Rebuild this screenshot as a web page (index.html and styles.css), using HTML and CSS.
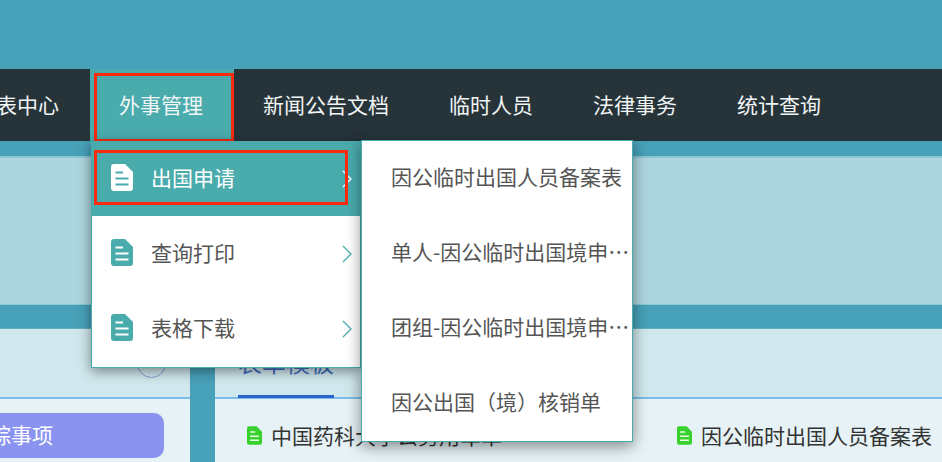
FILE: index.html
```html
<!DOCTYPE html>
<html lang="zh-CN">
<head>
<meta charset="utf-8">
<title>外事管理</title>
<link rel="stylesheet" href="styles.css">
</head>
<body>
<svg class="defs" width="0" height="0" aria-hidden="true">
  <symbol id="doc" viewBox="0 0 22 27">
    <path class="doc-body" d="M3 0H14L22 8V24Q22 27 19 27H3Q0 27 0 24V3Q0 0 3 0Z"/>
    <path class="doc-lines" d="M4.500 8.500H12M4.500 14.500H17.500M4.500 20.500H17.500"/>
  </symbol>
  <symbol id="chev" viewBox="0 0 10 18">
    <path d="M1 1L9 9L1 17" fill="none" stroke="currentColor" stroke-width="1.300"/>
  </symbol>
</svg>
<div class="page">
  <header class="top"></header>
  <nav class="nav">
    <div class="nav-list">
      <a class="nav-item">报表中心</a>
      <a class="nav-item is-active">外事管理<span class="mark mark-nav"></span></a>
      <a class="nav-item">新闻公告文档</a>
      <a class="nav-item">临时人员</a>
      <a class="nav-item">法律事务</a>
      <a class="nav-item">统计查询</a>
    </div>
    <div class="menu">
      <a class="menu-item is-active">
        <svg class="doc-icon"><use href="#doc"/></svg>
        <span class="menu-label">出国申请</span>
        <svg class="chev"><use href="#chev"/></svg>
        <span class="mark mark-menu"></span>
      </a>
      <a class="menu-item">
        <svg class="doc-icon"><use href="#doc"/></svg>
        <span class="menu-label">查询打印</span>
        <svg class="chev"><use href="#chev"/></svg>
      </a>
      <a class="menu-item">
        <svg class="doc-icon"><use href="#doc"/></svg>
        <span class="menu-label">表格下载</span>
        <svg class="chev"><use href="#chev"/></svg>
      </a>
    </div>
    <div class="submenu">
      <a class="sub-item">因公临时出国人员备案表</a>
      <a class="sub-item">单人-因公临时出国境申请审批表</a>
      <a class="sub-item">团组-因公临时出国境申请审批表</a>
      <a class="sub-item">因公出国（境）核销单</a>
    </div>
  </nav>
  <main class="main">
    <section class="hero"></section>
    <section class="lower">
      <div class="col-left">
        <div class="col-head col-head-left"><span class="circle"></span></div>
        <div class="col-body col-body-left">
          <div class="todo-btn">综事项</div>
        </div>
      </div>
      <div class="col-gutter"></div>
      <div class="col-right">
        <div class="col-head">
          <span class="tab">表单模板</span>
        </div>
        <div class="col-body files">
          <a class="file file-a"><svg class="file-icon"><use href="#doc"/></svg>中国药科大学公务用车单</a>
          <a class="file"><svg class="file-icon"><use href="#doc"/></svg>因公临时出国人员备案表</a>
        </div>
      </div>
    </section>
  </main>
</div>
</body>
</html>
```

FILE: styles.css
```css
* { box-sizing: border-box; }

html, body {
  margin: 0;
  padding: 0;
  height: 462px;
  overflow: hidden;
}

body {
  background: #47a1b8;
  font-family: "Noto Sans CJK SC", "Liberation Sans", sans-serif;
}

.defs { position: absolute; }

.page {
  display: flex;
  flex-direction: column;
  width: 942px;
  height: 462px;
  overflow: hidden;
}

.top { height: 69px; flex: none; }

.nav {
  position: relative;
  height: 72px;
  flex: none;
  background: #26343a;
  z-index: 5;
}

.nav-list {
  display: flex;
  height: 100%;
  margin-left: -54px;
}

.nav-item {
  position: relative;
  display: flex;
  align-items: center;
  padding: 0 31px 3px 29px;
  color: #f2f5f5;
  font-size: 21px;
  white-space: nowrap;
}

.nav-item.is-active { background: #4aabad; }

.mark {
  position: absolute;
  border: 3px solid #fa2a10;
  pointer-events: none;
}

.mark-nav { left: 4px; top: 4px; right: 0; bottom: -1px; }
.mark-menu { left: 2px; top: 9px; width: 254px; height: 55px; }

.menu {
  position: absolute;
  left: 91px;
  top: 72px;
  width: 270px;
  height: 227px;
  background: #fff;
  border: 1px solid #4aabad;
  border-top: 0;
  box-shadow: 0 3px 12px rgba(0, 0, 0, .45);
}

.menu-item {
  --doc-fill: #4aabad;
  --doc-line: #fff;
  position: relative;
  display: flex;
  align-items: center;
  height: 75px;
  padding: 0 0 2px 19px;
  color: #555;
  font-size: 21px;
}

.menu-item.is-active {
  --doc-fill: #fff;
  --doc-line: #4aabad;
  background: #4aabad;
  color: #fff;
}

.doc-icon { width: 22px; height: 27px; flex: none; }
.doc-body { fill: var(--doc-fill); }
.doc-lines { fill: none; stroke: var(--doc-line); stroke-width: 2.200; }

.menu-label { margin: 0 0 2px 18px; flex: 1; }

.chev {
  width: 10px;
  height: 18px;
  flex: none;
  margin: 2px 8px 0 0;
  color: #4aabad;
}

.is-active .chev { color: #fff; }

.submenu {
  position: absolute;
  left: 361px;
  top: 71px;
  width: 272px;
  height: 302px;
  background: #fff;
  border: 1px solid #4aabad;
  box-shadow: 0 4px 14px rgba(0, 0, 0, .45);
}

.sub-item {
  display: block;
  height: 75px;
  line-height: 71px;
  padding: 0 0 0 29px;
  color: #555;
  font-size: 21px;
  white-space: nowrap;
  overflow: hidden;
  text-overflow: ellipsis;
}

.main {
  display: flex;
  flex-direction: column;
  flex: 1;
  padding-top: 15px;
  gap: 23px;
}

.hero {
  height: 149px;
  flex: none;
  background: #acd5de;
  border-top: 2px solid #8ec6d4;
  border-bottom: 1px solid #8ec6d4;
}

.lower {
  display: flex;
  flex: 1;
  border-top: 1px solid #62adbf;
}

.col-left { width: 190px; flex: none; overflow: hidden; }
.col-gutter { width: 25px; flex: none; }
.col-right { flex: 1; min-width: 0; }

.col-head {
  position: relative;
  height: 70px;
  padding-left: 23px;
  background: #cfe7ed;
  border-bottom: 2px solid #7abde8;
}

.col-head-left { padding: 0; }

.circle {
  position: absolute;
  left: 137px;
  top: 20px;
  width: 29px;
  height: 29px;
  border: 1px solid #7f9fd0;
  border-radius: 50%;
}

.tab {
  display: block;
  width: 96px;
  height: 69px;
  line-height: 66px;
  border-bottom: 3px solid #2a62cc;
  color: #3f6fc0;
  font-size: 24px;
}

.col-body {
  height: 64px;
  background: #e6f2f5;
}

.col-body-left { padding-top: 14px; }

.todo-btn {
  display: flex;
  align-items: center;
  width: 204px;
  height: 45px;
  margin-left: -40px;
  padding: 0 0 3px 30px;
  border-radius: 10px;
  background: #8a94f0;
  color: #fff;
  font-size: 21px;
}

.files {
  --doc-fill: #37d32c;
  --doc-line: #e6f9e4;
  display: flex;
  padding: 16px 0 0 32px;
}

.file {
  display: flex;
  align-items: center;
  height: 40px;
  color: #333;
  font-size: 21px;
  white-space: nowrap;
}

.file-a { width: 430px; }

.file-icon {
  width: 15px;
  height: 19px;
  flex: none;
  margin-right: 9px;
}
```
